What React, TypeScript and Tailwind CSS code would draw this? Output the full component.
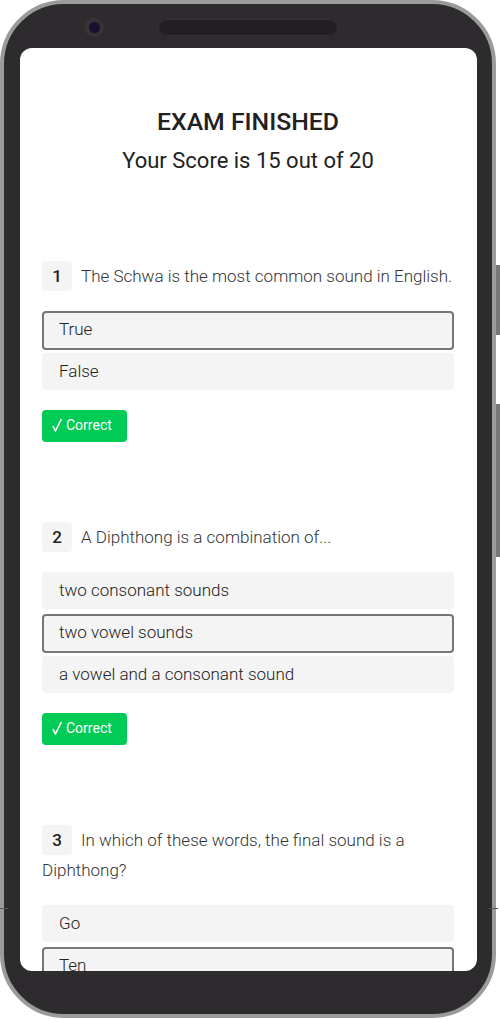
const questions = [
  {
    num: 1,
    text: "The Schwa is the most common sound in English.",
    options: ["True", "False"],
    picked: 0,
  },
  {
    num: 2,
    text: "A Diphthong is a combination of...",
    options: ["two consonant sounds", "two vowel sounds", "a vowel and a consonant sound"],
    picked: 1,
  },
  {
    num: 3,
    text: "In which of these words, the final sound is a Diphthong?",
    options: ["Go", "Ten"],
    picked: 1,
    noResult: true,
  },
];

function Question({ q }: { q: (typeof questions)[number] }) {
  return (
    <div className="flex flex-col gap-[20px] mb-[80px]">
      <p className="text-[17px] leading-[30px] font-light text-[#333]">
        <span className="inline-block w-[30px] h-[30px] mr-[9px] rounded-[4px] bg-[#f4f4f4] text-center font-medium text-[#222]">
          {q.num}
        </span>
        {q.text}
      </p>
      <div className="flex flex-col gap-[5px]">
        {q.options.map((opt, i) =>
          i === q.picked ? (
            <div
              key={opt}
              className="h-[39px] -mb-[2px] pl-[15px] pb-[2px] flex items-center rounded-[4px] border-2 border-[#767676] bg-[#f4f4f4] text-[17px] font-light text-[#222]"
            >
              {opt}
            </div>
          ) : (
            <div
              key={opt}
              className="h-[37px] pl-[17px] flex items-center rounded-[4px] bg-[#f4f4f4] text-[17px] font-light text-[#222]"
            >
              {opt}
            </div>
          )
        )}
      </div>
      {!q.noResult && (
        <div className="w-[85px] h-[32px] pl-[10px] pb-[2px] flex items-center gap-[4px] rounded-[4px] bg-[#00cc55] text-[14px] text-white">
          <svg width="10" height="14" viewBox="0 0 10 14" fill="none" stroke="white" strokeWidth="1.6">
            <path d="M1 8 L3.4 13 L9.4 1" />
          </svg>
          Correct
        </div>
      )}
    </div>
  );
}

export default function App() {
  return (
    <div className="relative w-[500px] h-[1019px] bg-white font-['Roboto',sans-serif] overflow-hidden">
      {/* side buttons */}
      <div className="absolute right-0 top-[265px] w-[4px] h-[70px] bg-[#777]" />
      <div className="absolute right-0 top-[404px] w-[4px] h-[153px] bg-[#777]" />
      {/* antenna lines */}
      <div className="absolute left-0 top-[908px] w-[8px] h-px bg-[#555]" />
      <div className="absolute left-[489px] top-[908px] w-[9px] h-px bg-[#555]" />

      <div className="w-[496px] h-[1018px] rounded-[64px] border-[4px] border-[#9b9b9b] bg-[#2d2b2d] flex flex-col pl-[16px]">
        {/* camera + speaker */}
        <div className="h-[44px] shrink-0 pt-[2px] pl-[64px] flex items-center gap-[54px]">
          <div className="w-[20px] h-[20px] rounded-full bg-[#353335] flex items-center justify-center">
            <div className="w-[11px] h-[11px] rounded-full bg-[#1a0f33]" />
          </div>
          <div className="w-[180px] h-[17px] rounded-full bg-[#211f21] border border-[#333133]" />
        </div>

        <div className="w-[457px] h-[923px] rounded-[12px] bg-white overflow-hidden pl-[22px] pr-[23px]">
          <div className="pt-[57px] pb-[85px] text-center text-[#212121]">
            <h1 className="text-[24.8px] leading-[34px] font-medium">EXAM FINISHED</h1>
            <p className="mt-[7px] text-[22px] leading-[30px] font-normal">Your Score is 15 out of 20</p>
          </div>
          {questions.map((q) => (
            <Question key={q.num} q={q} />
          ))}
        </div>
      </div>
    </div>
  );
}
